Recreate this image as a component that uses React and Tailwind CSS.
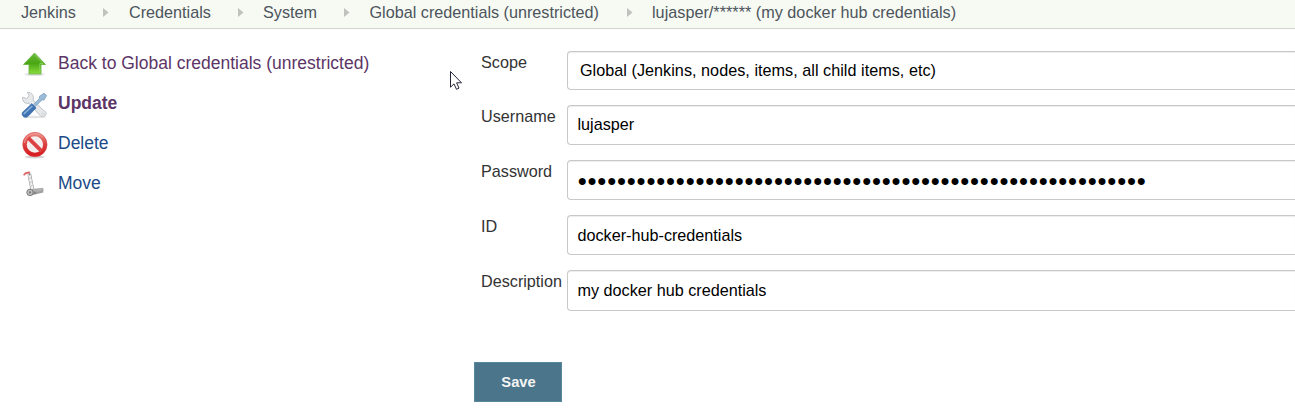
import React from "react";

function Chevron() {
  return (
    <svg className="h-[9px] w-[6px] shrink-0" viewBox="0 0 6 9">
      <path d="M0 0 L5.5 4.5 L0 9 Z" fill="#bfc2bd" />
    </svg>
  );
}

const crumbs = [
  { label: "Jenkins", width: "w-[82px]", gap: "w-[26px]" },
  { label: "Credentials", width: "w-[109px]", gap: "w-[25px]" },
  { label: "System", width: "w-[81px]", gap: "w-[25.5px]" },
  { label: "Global credentials (unrestricted)", width: "w-[257.5px]", gap: "w-[25px]" },
];

function Breadcrumbs() {
  return (
    <nav className="flex h-[29px] items-start border-b border-[#d2d4cd] bg-[#f6faf2] pl-[21px] text-[16.2px] leading-[25px] whitespace-nowrap text-[#4d545d]">
      {crumbs.map((c) => (
        <div key={c.label} className="flex items-center">
          <span className={c.width}>{c.label}</span>
          <span className={"flex items-center " + c.gap}>
            <Chevron />
          </span>
        </div>
      ))}
      <span className="tracking-[0.02px]">lujasper/****** (my docker hub credentials)</span>
    </nav>
  );
}

function UpIcon() {
  return (
    <svg className="h-7 w-7" viewBox="0 0 28 28">
      <defs>
        <linearGradient id="up" x1="0" y1="0" x2="0" y2="1">
          <stop offset="0" stopColor="#69b936" />
          <stop offset=".5" stopColor="#4aa714" />
          <stop offset="1" stopColor="#8bdd3c" />
        </linearGradient>
      </defs>
      <ellipse cx="14.5" cy="24.5" rx="10" ry="1.6" fill="#e3e3e3" />
      <path d="M14.5 3 L25.5 14.5 H21 V24 H9 V14.5 H3.5 Z" fill="url(#up)" stroke="#6db548" strokeWidth=".9" strokeLinejoin="round" />
      <path d="M14.5 4.8 L23 13.5 H19.8 V22.8" fill="none" stroke="#8ed561" strokeWidth=".8" />
    </svg>
  );
}

function ToolsIcon() {
  return (
    <svg className="mt-px h-7 w-7" viewBox="0 0 28 28">
      <ellipse cx="14" cy="26" rx="12" ry="1.2" fill="#e4e4e4" />
      <path d="M7.4 1.2 L9.1 4.8 L6.6 7.6 L2.7 6.2 C1.8 10.1 5.1 13.2 9 12.3 L19.9 24.4 C21.5 26.8 26 26 26.1 22.8 C26.2 21 25 19.7 23.4 19.4 L13.2 9 C14.2 4.7 11.6 1 7.4 1.2 Z" fill="#e6e8ea" stroke="#b9bdc2" strokeWidth=".9" strokeLinejoin="round" />
      <circle cx="22.9" cy="22.8" r="1" fill="#fff" stroke="#b9bdc2" strokeWidth=".6" />
      <path d="M13.3 13.6 L19.7 7.2 L19.5 5.3 L24 2.2 L26.6 4.5 L24 9 L21.9 8.9 L15.2 15.6 Z" fill="#9cbbd8" stroke="#86a5c4" strokeWidth=".9" strokeLinejoin="round" />
      <path d="M11.7 12.7 L16.1 17 C13.2 19.3 10.9 23.1 7.1 26 C4.4 27.2 1 24.2 2.4 21.4 C5.5 18.1 9 15.8 11.7 12.7 Z" fill="#3f73b3" stroke="#3868a5" strokeWidth=".7" />
      <path d="M4.3 22.5 L11.8 15.5" stroke="#87b0dd" strokeWidth="1.7" strokeLinecap="round" />
    </svg>
  );
}

function StopIcon() {
  return (
    <svg className="mt-px h-7 w-7" viewBox="0 0 28 28">
      <defs>
        <linearGradient id="stop" x1="0" y1="0" x2="0" y2="1">
          <stop offset="0" stopColor="#e9807a" />
          <stop offset=".5" stopColor="#dc4040" />
          <stop offset="1" stopColor="#d81c22" />
        </linearGradient>
      </defs>
      <ellipse cx="14.7" cy="26" rx="10" ry="1.5" fill="#d4d4d4" />
      <circle cx="14.9" cy="13.5" r="10.2" fill="#f4eeee" stroke="url(#stop)" strokeWidth="4" />
      <path d="M8.2 6.8 L21.6 20.2" stroke="#dc4242" strokeWidth="3.8" />
      <circle cx="14.9" cy="13.5" r="12.2" fill="none" stroke="#cf4a4a" strokeWidth=".5" />
      <path d="M4.4 11.8 A10.7 10.7 0 0 1 23 6.4" fill="none" stroke="#f3a39b" strokeWidth=".8" />
    </svg>
  );
}

function TrolleyIcon() {
  return (
    <svg className="h-7 w-7" viewBox="0 0 28 28">
      <path d="M9 23 L23 20.8 L23.4 22.5 L11 25.6 Z" fill="#a2a2a2" />
      <path d="M9.3 4.2 L12.6 20.8" stroke="#a0a0a0" strokeWidth="3.8" />
      <path d="M9.3 4.4 L12.6 20.5" stroke="#f0f0f0" strokeWidth="2.5" />
      <path d="M9.2 8.5 L11.2 8 M10 12.3 L12 11.8 M10.8 16 L12.8 15.5" stroke="#a5a5a5" strokeWidth=".6" />
      <path d="M4.2 4.6 L5.8 3 L9.2 2.5" fill="none" stroke="#dd6262" strokeWidth="1.8" strokeLinecap="round" />
      <path d="M9.9 3.2 L9.5 5.3" stroke="#777" strokeWidth="1" />
      <path d="M12.5 19.2 L23 18.3 L23.2 21 L13 22.6 Z" fill="#b1b1b1" stroke="#999" strokeWidth=".6" />
      <circle cx="10" cy="22.4" r="3.2" fill="#c0c0c0" stroke="#6f6f6f" strokeWidth=".9" />
      <circle cx="10" cy="22.4" r="1.1" fill="#777" />
      <circle cx="14.8" cy="22.7" r="1.3" fill="#858585" />
    </svg>
  );
}

const tasks = [
  { label: "Back to Global credentials (unrestricted)", icon: UpIcon, style: "text-[#5c3566]" },
  { label: "Update", icon: ToolsIcon, style: "font-bold text-[#5c3566]" },
  { label: "Delete", icon: StopIcon, style: "text-[#204a87]" },
  { label: "Move", icon: TrolleyIcon, style: "text-[#204a87]" },
];

function Sidebar() {
  return (
    <aside className="w-[474px] shrink-0 pt-[14px] pl-[20px]">
      {tasks.map(({ label, icon: Icon, style }) => (
        <div key={label} className="flex h-10 items-start">
          <div className="w-[38px] pt-[7px]">
            <Icon />
          </div>
          <a className={"text-[17.5px] leading-[40px] whitespace-nowrap " + style}>{label}</a>
        </div>
      ))}
    </aside>
  );
}

const fields = [
  { label: "Scope", value: "Global (Jenkins, nodes, items, all child items, etc)", box: "h-[39px] pl-[12px] leading-[37px] tracking-[0.03px]", row: "h-[54px]" },
  { label: "Username", value: "lujasper", box: "h-[40px] pl-[9.5px] leading-[37px]", row: "h-[55px]" },
  { label: "Password", value: "●".repeat(58), box: "h-[40px] pl-[9.5px] leading-[38px] tracking-[0.03px]", row: "h-[55px]" },
  { label: "ID", value: "docker-hub-credentials", box: "h-[40px] pl-[9.5px] leading-[39px]", row: "h-[55px]" },
  { label: "Description", value: "my docker hub credentials", box: "h-[41px] pl-[9.5px] leading-[39px]", row: "h-[92px]" },
];

function CredentialForm() {
  return (
    <main className="min-w-0 flex-1 pt-[22px]">
      {fields.map((f) => (
        <div key={f.label} className={"flex items-start pl-[7px] text-[16.2px] " + f.row}>
          <label className="w-[86px] shrink-0 leading-[23px] text-[#333]">{f.label}</label>
          <div className={"min-w-0 flex-1 rounded-l-[4px] border border-r-0 border-[#c8c8c8] whitespace-nowrap text-black shadow-[inset_0_1px_1px_rgba(0,0,0,0.075)] " + f.box}>
            {f.value}
          </div>
        </div>
      ))}
      <button className="h-[40px] w-[88px] border border-[#5788a0] bg-[#4b758b] pt-px pl-px text-[14.7px] font-bold text-[#f4f4f4]">
        Save
      </button>
    </main>
  );
}

function Cursor() {
  return (
    <svg className="absolute top-[70px] left-[449px] h-[21px] w-[14px]" viewBox="0 0 14 21">
      <path d="M1.5 1.5 V17.2 L5 13.9 L7.5 19.3 L10 18.1 L7.6 12.8 H12.5 Z" fill="#fff" stroke="#25253a" strokeWidth="1" strokeLinejoin="round" />
    </svg>
  );
}

export default function App() {
  return (
    <div className="relative h-[413px] w-[1295px] overflow-hidden bg-white font-['Liberation_Sans',Arial,sans-serif]">
      <Breadcrumbs />
      <div className="flex">
        <Sidebar />
        <CredentialForm />
      </div>
      <Cursor />
    </div>
  );
}
